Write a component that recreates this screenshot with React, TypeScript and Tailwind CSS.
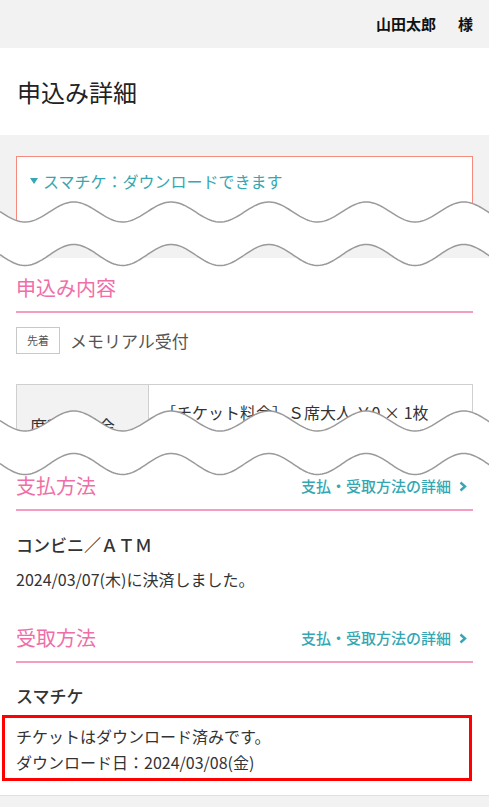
import React from 'react';

const font = { fontFamily: '"Noto Sans CJK JP", "Noto Sans", sans-serif' };

// sine line across the page, trough at x=25
function wavePts(mid: number, amp: number) {
  const pts: string[] = [];
  for (let x = 0; x <= 490; x += 2) {
    const y = mid + amp * Math.cos((2 * Math.PI * (x - 25)) / 97.5);
    pts.push(`${x},${y.toFixed(2)}`);
  }
  return pts;
}

function Tear({ top }: { top: string }) {
  const a = wavePts(14, 10);
  const b = wavePts(57, 10.5);
  const fill = `M${a.join(' L')} L${[...b].reverse().join(' L')} Z`;
  return (
    <svg className={`pointer-events-none absolute left-0 ${top}`} width="489" height="72" viewBox="0 0 489 72">
      <path d={fill} fill="#fff" />
      <path d={`M${a.join(' L')}`} fill="none" stroke="#9a9a9a" strokeWidth="1.5" />
      <path d={`M${b.join(' L')}`} fill="none" stroke="#9a9a9a" strokeWidth="1.5" />
    </svg>
  );
}

function Chevron() {
  return (
    <svg width="8" height="11" viewBox="0 0 8 11" className="ml-2">
      <polyline points="1.5,1.5 6,5.5 1.5,9.5" fill="none" stroke="#35a7b2" strokeWidth="2.4" />
    </svg>
  );
}

function Heading({ title, link }: { title: string; link?: boolean }) {
  return (
    <div className="flex items-center justify-between border-b-2 border-[#f49cc2] pb-[9px]">
      <h2 className="text-[20px] leading-[28px] text-[#f06ea8]">{title}</h2>
      {link && (
        <a className="mr-[6px] flex items-center text-[15px] font-medium text-[#35a7b2]">
          支払・受取方法の詳細<Chevron />
        </a>
      )}
    </div>
  );
}

export default function App() {
  return (
    <div className="relative min-h-[808px] w-[489px] overflow-hidden bg-white text-[#333]" style={font}>
      {/* header */}
      <div className="flex h-12 items-center justify-end gap-[22px] bg-[#f2f2f2] pr-4 text-[15px] font-bold text-[#111]">
        <span>山田太郎</span>
        <span>様</span>
      </div>

      <div className="flex h-[87px] items-center px-[17px]">
        <h1 className="text-[24px] text-[#222]">申込み詳細</h1>
      </div>

      {/* smart ticket banner */}
      <div className="h-[123px] overflow-hidden bg-[#f2f2f2] px-4 pt-[21px]">
        <div className="h-[70px] border-[1.5px] border-[#f58b7d] bg-white pl-[13px] pt-[12px]">
          <div className="flex items-center text-[16px] leading-[24px] text-[#35a7b2]">
            <svg width="8" height="6" viewBox="0 0 8 6" className="mr-[5px]">
              <polygon points="0,0 8,0 4,6" fill="#35a7b2" />
            </svg>
            スマチケ：ダウンロードできます
          </div>
        </div>
      </div>

      <div className="px-4 pt-4">
        <Heading title="申込み内容" />

        <div className="mt-[14px] flex items-center">
          <span className="flex h-[27px] w-[44px] items-center justify-center border border-[#c8c8c8] text-[11px] text-[#555]">先着</span>
          <span className="ml-[10px] text-[17px] text-[#555]">メモリアル受付</span>
        </div>

        <div className="mt-[30px] flex h-[62px] border border-[#cfcfcf]">
          <div className="w-[132px] shrink-0 border-r border-[#cfcfcf] bg-[#f2f2f2] pl-[13px] pt-[29px] text-[17px] leading-[24px]">席種・料金</div>
          <div className="pl-[11px] pt-[15px] text-[16px] leading-[24px]">［チケット料金］Ｓ席大人 ￥0 × 1枚</div>
        </div>

        <div className="mt-[26px]">
          <Heading title="支払方法" link />
        </div>
        <p className="mt-[22px] text-[17px] font-medium leading-[24px]">コンビニ／ＡＴＭ</p>
        <p className="mt-[11px] text-[16px] leading-[22px]">2024/03/07(木)に決済しました。</p>

        <div className="mt-[34px]">
          <Heading title="受取方法" link />
        </div>
        <p className="mt-[21px] text-[17px] font-medium leading-[24px]">スマチケ</p>
        <div className="-ml-[14px] mt-[7px] w-[470px] border-[3px] border-[#ff0000] pb-[3px] pl-[11px] pt-[5px] text-[16px] leading-[26px]">
          <p>チケットはダウンロード済みです。</p>
          <p>ダウンロード日：2024/03/08(金)</p>
        </div>
      </div>

      <div className="mt-[14px] h-3 border-t border-[#e0e0e0] bg-[#f2f2f2]" />

      <Tear top="top-[198px]" />
      <Tear top="top-[407px]" />
    </div>
  );
}
